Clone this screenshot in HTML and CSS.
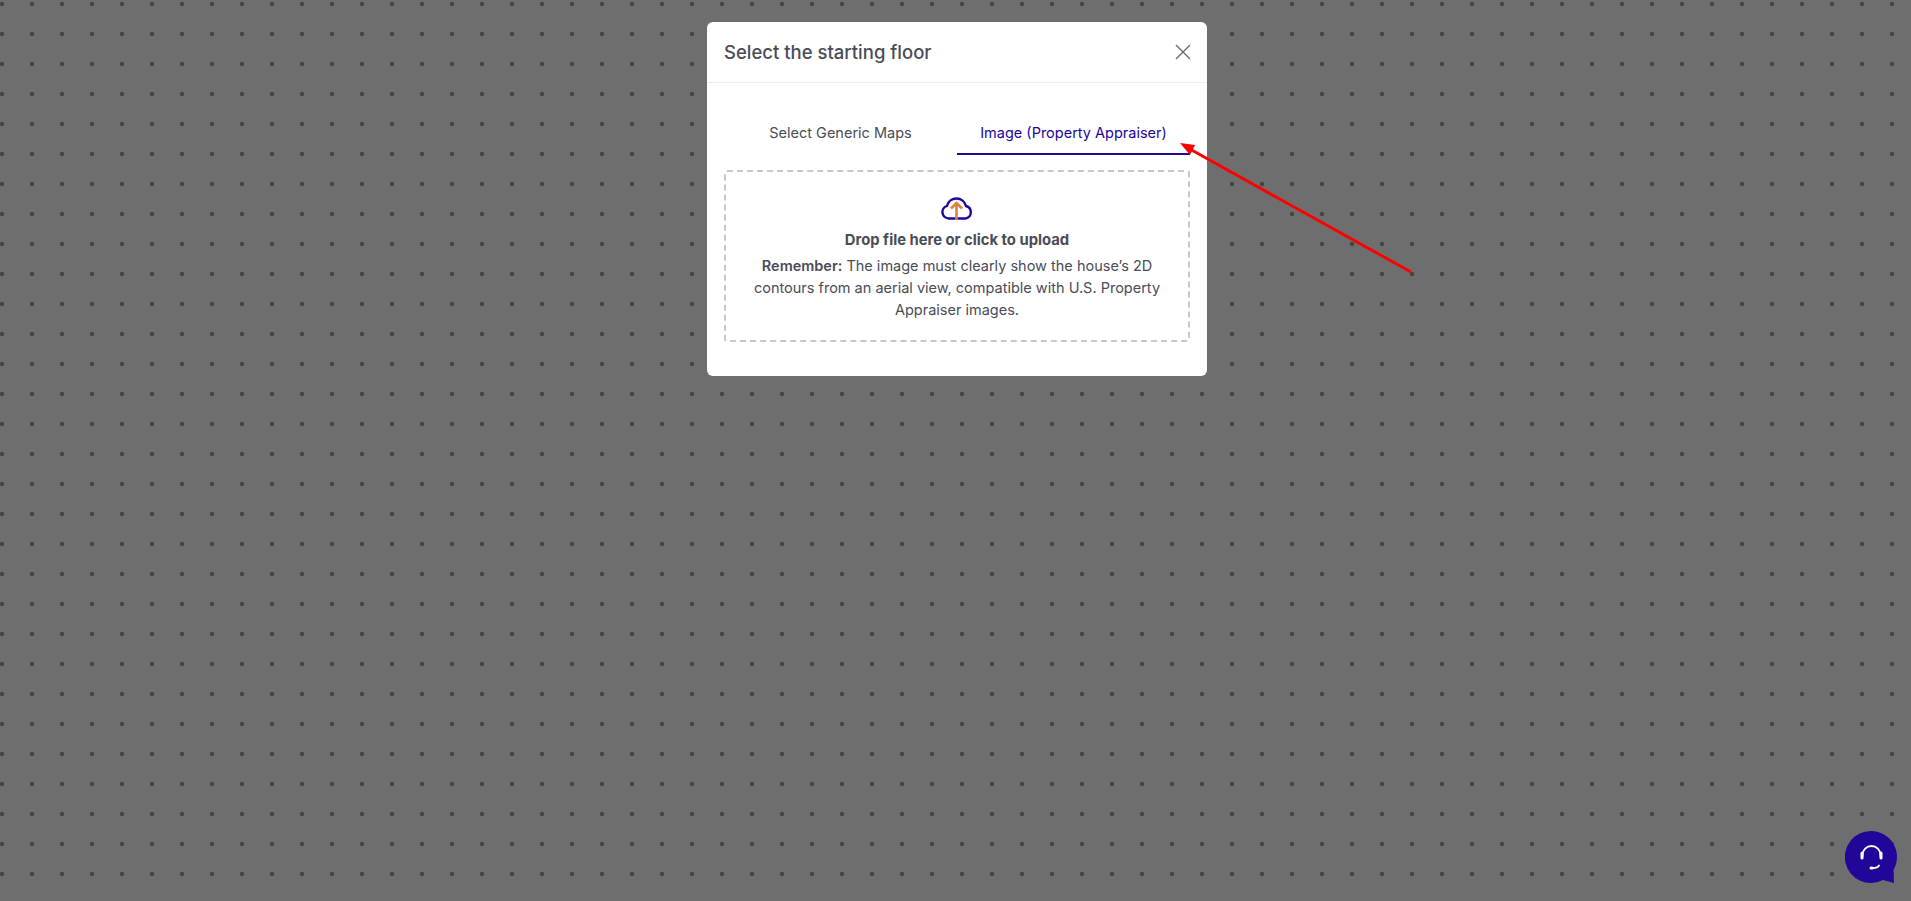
FILE: index.html
```html
<!DOCTYPE html>
<html>
<head>
  <title>Select the starting floor</title>
  <link rel="stylesheet" href="styles.css">
</head>
<body>
<div class="backdrop">
  <div class="modal">
    <div class="modal-header">
      <h2>Select the starting floor</h2>
      <svg class="close" viewBox="0 0 16 16" width="16" height="16"><path d="M1 1l14 14M15 1L1 15"/></svg>
    </div>
    <div class="modal-body">
      <div class="tabs">
        <div class="tab">Select Generic Maps</div>
        <div class="tab active">Image (Property Appraiser)</div>
      </div>
      <div class="dropzone">
        <svg class="cloud" viewBox="0 0 32 27" width="32" height="27">
          <path class="cloud-line" d="M8 25.500A6.500 6.500 0 0 1 6 12.800 9.800 9.800 0 0 1 25 13 6.400 6.400 0 0 1 24.500 25.500Z"/>
          <path class="cloud-arrow" d="M15.500 27V10M10 15.500L15.500 10l5.500 5.500"/>
        </svg>
        <div class="drop-title">Drop file here or click to upload</div>
        <p class="drop-text"><b>Remember:</b> The image must clearly show the house’s 2D contours from an aerial view, compatible with U.S. Property Appraiser images.</p>
      </div>
    </div>
  </div>
</div>

<svg class="arrow" viewBox="0 0 260 160" width="260" height="160">
  <path class="arrow-line" d="M241 142L18 18"/>
  <path class="arrow-head" d="M10 13L25 15L20 25Z"/>
</svg>

<div class="chat">
  <svg viewBox="0 0 52 56" width="52" height="56">
    <path class="chat-bg" d="M26 0a26 26 0 0 1 22.500 39L49 52 38 49A26 26 0 1 1 26 0Z"/>
    <path class="chat-icon" d="M17.500 25v-1a9 9 0 0 1 18 0v1"/>
    <path class="chat-icon thick" d="M17 22v5M36 22v5"/>
    <path class="chat-icon" d="M34 34.500c-1 2-3 2.500-6 2.500"/>
    <path class="chat-icon thick" d="M26 37h1"/>
  </svg>
</div>
</body>
</html>
```

FILE: styles.css
```css
html, body {
  margin: 0;
  padding: 0;
  height: 100%;
  overflow: hidden;
}
body {
  font-family: Inter, "Noto Sans", sans-serif;
  color: #4a4c58;
}
.backdrop {
  display: flex;
  justify-content: center;
  align-items: flex-start;
  height: 100%;
  box-sizing: border-box;
  padding-top: 22px;
  background-color: #6e6e6e;
  background-image: radial-gradient(circle, #444 0, #444 1.8px, transparent 2.6px);
  background-size: 30px 30px;
  background-position: -13px -11px;
}
.modal {
  width: 500px;
  height: 354px;
  margin-left: 3px;
  background: #fff;
  border-radius: 6px;
}
.modal-header {
  display: flex;
  justify-content: space-between;
  align-items: center;
  height: 60px;
  padding: 0 16px 0 17px;
  border-bottom: 1px solid #ececec;
}
.modal-header h2 {
  margin: 0;
  font-size: 18.500px;
  font-weight: 500;
}
.close {
  fill: none;
  stroke: #6b6b6b;
  stroke-width: 1.4;
}
.modal-body {
  padding: 28px 17px 0;
}
.tabs {
  display: flex;
  height: 44px;
}
.tab {
  flex: 1;
  text-align: center;
  font-size: 14.500px;
  line-height: 44px;
}
.tab.active {
  color: #22069a;
  border-bottom: 2px solid #22069a;
}
.dropzone {
  margin-top: 15px;
  height: 172px;
  box-sizing: border-box;
  padding-top: 21px;
  border: 2px dashed #c8c8c8;
  border-radius: 3px;
  text-align: center;
}
.cloud {
  display: block;
  margin: 0 auto;
}
.cloud-line {
  fill: none;
  stroke: #22069a;
  stroke-width: 2.400;
}
.cloud-arrow {
  fill: none;
  stroke: #e0823a;
  stroke-width: 2.600;
}
.drop-title {
  margin-top: 10px;
  font-size: 14.800px;
  font-weight: 700;
  line-height: 20px;
}
.drop-text {
  margin: 5px 18px 0;
  font-size: 14.500px;
  line-height: 22px;
}
.drop-text b {
  font-weight: 600;
}
.arrow {
  position: absolute;
  left: 1170px;
  top: 130px;
}
.arrow-line {
  stroke: #ff0000;
  stroke-width: 3;
}
.arrow-head {
  fill: #ff0000;
}
.chat {
  position: absolute;
  left: 1845px;
  top: 831px;
}
.chat-bg {
  fill: #22069a;
}
.chat-icon {
  fill: none;
  stroke: #fff;
  stroke-width: 1.800;
  stroke-linecap: round;
}
.chat-icon.thick {
  stroke-width: 3;
}
```
